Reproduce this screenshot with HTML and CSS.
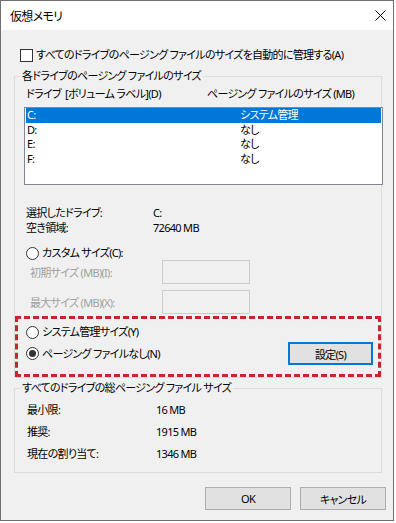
FILE: index.html
```html
<!DOCTYPE html>
<html lang="ja">
<head>
    <meta charset="UTF-8">
    <title>仮想メモリ</title>
    <link rel="stylesheet" href="styles.css">
</head>
<body>
    <div class="window">
        <div class="titlebar">
            <span class="title">仮想メモリ</span>
            <svg class="close" width="11" height="11" viewBox="0 0 11 11">
                <path d="M0.5 0.5 L10.5 10.5 M10.5 0.5 L0.5 10.5" stroke="#000" stroke-width="1" fill="none"/>
            </svg>
        </div>
        <div class="content">
            <label class="check"><span class="box"></span>すべてのドライブのページング ファイルのサイズを自動的に管理する(A)</label>

            <fieldset class="group drives">
                <legend>各ドライブのページング ファイルのサイズ</legend>
                <div class="cols">
                    <span>ドライブ&nbsp; [ボリューム ラベル](D)</span>
                    <span>ページング ファイルのサイズ (MB)</span>
                </div>
                <div class="listbox">
                    <div class="row selected"><span>C:</span><span>システム管理</span></div>
                    <div class="row"><span>D:</span><span>なし</span></div>
                    <div class="row"><span>E:</span><span>なし</span></div>
                    <div class="row"><span>F:</span><span>なし</span></div>
                </div>
                <div class="info">
                    <span>選択したドライブ:</span><span>C:</span>
                    <span>空き領域:</span><span>72640 MB</span>
                </div>
                <div class="radio custom"><span class="dot"></span>カスタム サイズ(C):</div>
                <div class="size first">
                    <span>初期サイズ (MB)(I):</span><span class="field"></span>
                </div>
                <div class="size second">
                    <span>最大サイズ (MB)(X):</span><span class="field"></span>
                </div>
                <div class="highlight">
                    <div class="radio"><span class="dot"></span>システム管理サイズ(Y)</div>
                    <span></span>
                    <div class="radio"><span class="dot on"></span>ページング ファイルなし(N)</div>
                    <button class="set">設定(S)</button>
                </div>
            </fieldset>

            <fieldset class="group totals">
                <legend>すべてのドライブの総ページング ファイル サイズ</legend>
                <div class="stats">
                    <span>最小限:</span><span>16 MB</span>
                    <span>推奨:</span><span>1915 MB</span>
                    <span>現在の割り当て:</span><span>1346 MB</span>
                </div>
            </fieldset>

            <div class="actions">
                <button>OK</button>
                <button>キャンセル</button>
            </div>
        </div>
    </div>
</body>
</html>
```

FILE: styles.css
```css
body {
    margin: 0;
    background-color: #fff;
    font-family: "Noto Sans", "Noto Sans CJK JP", sans-serif;
    font-size: 11px;
    letter-spacing: -0.7px;
    font-feature-settings: "palt";
    color: #000;
}
.window {
    width: 394px;
    height: 521px;
    box-sizing: border-box;
    border: 1px solid #707070;
    background-color: #f0f0f0;
    display: flex;
    flex-direction: column;
}
.titlebar {
    height: 29px;
    flex: none;
    background-color: #fff;
    display: flex;
    align-items: center;
    justify-content: space-between;
    padding: 0 7px 0 9px;
}
.title {
    font-size: 12px;
}
.content {
    flex: 1;
    display: flex;
    flex-direction: column;
    padding: 0 7px 10px 13px;
}
.check {
    display: flex;
    align-items: center;
    gap: 3px;
    margin: 17px 0 0 6px;
    line-height: 16px;
    white-space: nowrap;
}
.box {
    width: 13px;
    height: 13px;
    flex: none;
    box-sizing: border-box;
    border: 1px solid #333;
    background-color: #fff;
}
/* group boxes */
.group {
    margin: 5px 4px 0 0;
    padding: 0;
    border: 1px solid #dcdcdc;
    min-width: 0;
}
.group legend {
    margin-left: 5px;
    padding: 0 2px;
    line-height: 16px;
}
.totals {
    margin-top: 2px;
    padding-bottom: 8px;
}
.cols {
    display: grid;
    grid-template-columns: 181px 1fr;
    padding-left: 11px;
    margin-top: 2px;
    line-height: 16px;
}
.listbox {
    margin: 5px -2px 0 9px;
    height: 78px;
    box-sizing: border-box;
    border: 1px solid #828790;
    background-color: #fff;
    padding: 0 1px;
}
.row {
    display: grid;
    grid-template-columns: 213px 1fr;
    height: 14.5px;
    line-height: 14.5px;
    padding-left: 1px;
}
.row.selected {
    background-color: #0078d7;
    color: #fff;
}
.info {
    display: grid;
    grid-template-columns: 127px 1fr;
    margin-top: 20px;
    padding-left: 11px;
    line-height: 15px;
}
.radio {
    display: flex;
    align-items: center;
    gap: 3px;
    line-height: 16px;
}
.custom {
    margin: 10px 0 0 11px;
}
.dot {
    width: 13px;
    height: 13px;
    flex: none;
    box-sizing: border-box;
    border: 1px solid #333;
    border-radius: 50%;
    background-color: #fff;
    display: flex;
    align-items: center;
    justify-content: center;
}
.dot.on::after {
    content: "";
    width: 7px;
    height: 7px;
    border-radius: 50%;
    background-color: #333;
}
.size {
    display: grid;
    grid-template-columns: 132px 88px;
    align-items: center;
    padding-left: 15px;
    color: #a0a0a0;
}
.size.first {
    margin-top: -1px;
}
.size.second {
    margin-top: 6px;
}
.field {
    height: 24px;
    box-sizing: border-box;
    border: 1px solid #ccc;
    background-color: #f0f0f0;
}
/* red marker round the two options */
.highlight {
    margin-top: 2px;
    border: 3px dashed #c4262c;
    padding: 5px 5px 9px 8px;
    display: grid;
    grid-template-columns: 1fr auto;
    row-gap: 2px;
    align-items: center;
}
button {
    font-family: inherit;
    font-size: 11px;
    letter-spacing: -0.7px;
    font-feature-settings: "palt";
    color: #000;
    background-color: #e1e1e1;
    border: 1px solid #adadad;
    padding: 0;
    width: 86px;
    height: 23px;
}
.set {
    width: 85px;
    border: 2px solid #0078d7;
}
.stats {
    display: grid;
    grid-template-columns: 129px 1fr;
    grid-auto-rows: 22px;
    align-items: center;
    margin-top: 2px;
    padding-left: 12px;
}
.actions {
    display: flex;
    justify-content: flex-end;
    gap: 9px;
    margin-top: 14px;
}
```
